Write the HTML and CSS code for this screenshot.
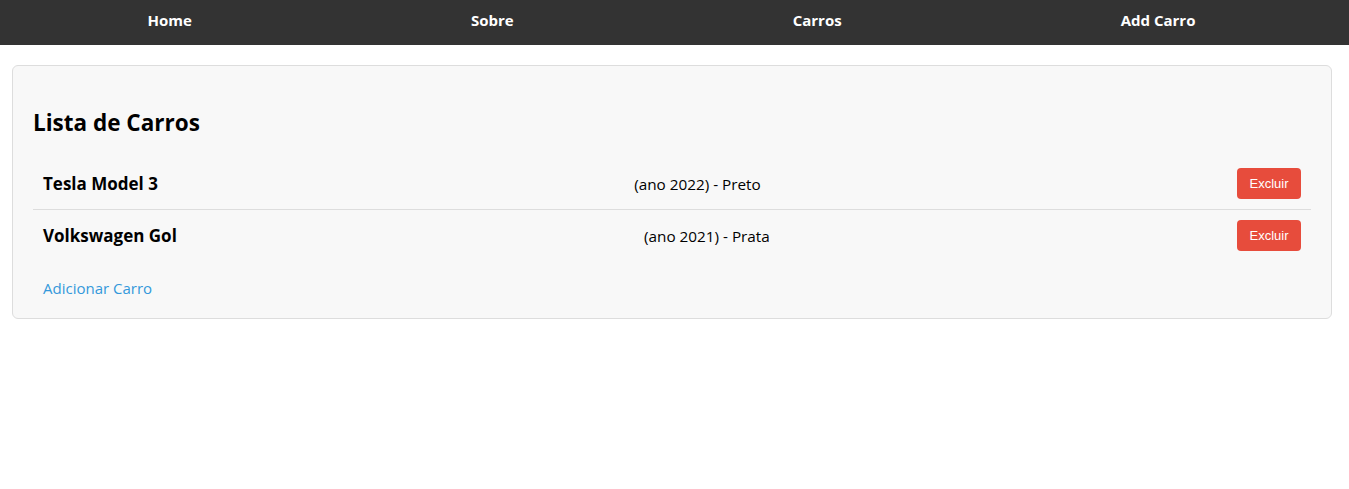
FILE: index.html
```html
<!DOCTYPE html>
<html lang="pt-BR">
<head>
<meta charset="utf-8">
<title>Lista de Carros</title>
<link rel="stylesheet" href="styles.css">
</head>
<body>
<nav class="navbar">
  <ul class="nav-list">
    <li><a href="#" class="nav-link">Home</a></li>
    <li><a href="#" class="nav-link">Sobre</a></li>
    <li><a href="#" class="nav-link">Carros</a></li>
    <li><a href="#" class="nav-link">Add Carro</a></li>
  </ul>
</nav>
<main class="card">
  <h2 class="title">Lista de Carros</h2>
  <ul class="car-list">
    <li class="car-item">
      <span class="car-name">Tesla Model 3</span>
      <span class="car-info">(ano 2022) - Preto</span>
      <button class="btn-delete">Excluir</button>
    </li>
    <li class="car-item">
      <span class="car-name">Volkswagen Gol</span>
      <span class="car-info">(ano 2021) - Prata</span>
      <button class="btn-delete">Excluir</button>
    </li>
  </ul>
  <a href="#" class="add-link">Adicionar Carro</a>
</main>
</body>
</html>
```
FILE: styles.css
```css
* { box-sizing: border-box; }
body {
  margin: 0;
  font-family: "Open Sans", "Noto Sans", sans-serif;
  color: #000;
  background: #fff;
}
.navbar {
  background: #333;
  height: 45px;
  padding: 10px 14px 0 8px;
}
.nav-list {
  list-style: none;
  margin: 0;
  padding: 0;
  display: flex;
  justify-content: space-around;
  align-items: center;
  line-height: 20px;
}
.nav-link {
  color: #fff;
  text-decoration: none;
  font-weight: bold;
  font-size: 15px;
}
.card {
  display: block;
  margin: 20px 17px 20px 12px;
  padding: 20px;
  background: #f8f8f8;
  border: 1px solid #ddd;
  border-radius: 6px;
}
.title {
  font-size: 22.5px;
  margin: 21px 0 19px;
  line-height: 32px;
}
.car-list {
  list-style: none;
  margin: 0;
  padding: 0;
}
.car-item {
  display: flex;
  justify-content: space-between;
  align-items: center;
  padding: 10px;
  border-bottom: 1px solid #ddd;
}
.car-item:last-child { border-bottom: none; }
.car-name {
  font-weight: bold;
  font-size: 17px;
}
.car-info {
  font-size: 15.3px;
}
.btn-delete {
  background: #e74c3c;
  color: #fff;
  border: none;
  border-radius: 4px;
  height: 31px;
  padding: 0 12.5px;
  font-family: "Liberation Sans", Arial, sans-serif;
  font-size: 13px;
}
.add-link {
  display: block;
  margin-top: 17px;
  padding: 0 10px;
  color: #3498db;
  text-decoration: none;
  font-size: 15px;
  line-height: 20px;
}
```
